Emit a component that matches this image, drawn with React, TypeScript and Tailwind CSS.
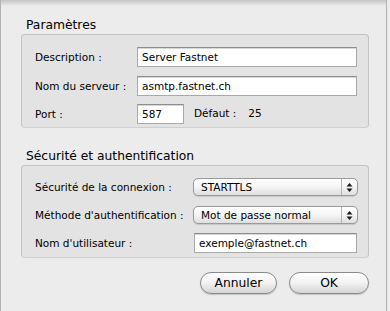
import React from 'react';

const FONT = "font-['DejaVu_Sans',sans-serif]";

function TextField({ value, width }: { value: string; width: string }) {
  return (
    <div
      className={`${width} h-[20px] border border-[#a9a9a9] border-t-[#8d8d8d] bg-white pl-[4px] text-[10.5px] leading-[18px] text-black shadow-[inset_0_1px_0_#d8d8d8]`}
    >
      {value}
    </div>
  );
}

function PopUp({ value }: { value: string }) {
  return (
    <div className="flex h-[18px] w-[165px] items-stretch rounded-[5px] border border-[#9a9a9a] bg-gradient-to-b from-white via-[#f5f5f5] to-[#dedede] shadow-[0_1px_1px_rgba(0,0,0,0.12)]">
      <span className="flex-1 pl-[7px] text-[10.5px] leading-[16px]">{value}</span>
      <span className="flex w-[16px] items-center justify-center border-l border-[#b3b3b3]">
        <svg width="7" height="11" viewBox="0 0 7 11">
          <path d="M3.5 1 L6.5 4.5 H0.5 Z" fill="#1a1a1a" />
          <path d="M3.5 10 L6.5 6.5 H0.5 Z" fill="#1a1a1a" />
        </svg>
      </span>
    </div>
  );
}

function Row({ label, labelWidth, children, className = '' }: { label: string; labelWidth: string; children: React.ReactNode; className?: string }) {
  return (
    <div className={`flex items-center ${className}`}>
      <span className={`${labelWidth} flex-none text-[10.5px] leading-[13px]`}>{label}</span>
      {children}
    </div>
  );
}

function PillButton({ label, width }: { label: string; width: string }) {
  return (
    <button
      type="button"
      className={`${width} h-[22px] rounded-full border border-[#8a8a8a] bg-gradient-to-b from-white via-[#f2f2f2] to-[#d4d4d4] text-[12.3px] leading-[20px] text-black shadow-[0_1px_1px_rgba(0,0,0,0.18)]`}
    >
      {label}
    </button>
  );
}

export default function App() {
  return (
    <div className={`flex h-[311px] w-[390px] bg-[#ececec] text-black ${FONT}`}>
      <div className="flex h-full w-[387px] flex-col border-x border-[#b2b2b2]">
        {/* title bar shadow */}
        <div className="h-[6px] bg-gradient-to-b from-[#c4c4c4] to-[#ececec]" />

        <div className="flex flex-col pl-[20px]">
          <h2 className="ml-[5px] mt-[12px] text-[12.3px] leading-[15px] font-normal">Paramètres</h2>
          <div className="mt-[1px] h-[94px] w-[348px] rounded-[4px] border border-[#c3c3c3] border-b-[#d0d0d0] bg-[#e3e3e3] pl-[13px] pt-[12px]">
            <Row label="Description :" labelWidth="w-[102px]">
              <TextField value="Server Fastnet" width="w-[220px]" />
            </Row>
            <Row label="Nom du serveur :" labelWidth="w-[102px]" className="mt-[9px]">
              <TextField value="asmtp.fastnet.ch" width="w-[220px]" />
            </Row>
            <Row label="Port :" labelWidth="w-[102px]" className="mt-[8px]">
              <TextField value="587" width="w-[47px]" />
              <span className="ml-[10px] text-[10.5px]">Défaut :</span>
              <span className="ml-[12px] text-[10.5px]">25</span>
            </Row>
          </div>

          <h2 className="ml-[5px] mt-[21px] text-[12.3px] leading-[15px] font-normal">Sécurité et authentification</h2>
          <div className="mt-[1px] h-[93px] w-[348px] rounded-[4px] border border-[#c3c3c3] border-b-[#d0d0d0] bg-[#e3e3e3] pl-[13px] pt-[12px]">
            <Row label="Sécurité de la connexion :" labelWidth="w-[158px]">
              <PopUp value="STARTTLS" />
            </Row>
            <Row label="Méthode d'authentification :" labelWidth="w-[158px]" className="mt-[10px]">
              <PopUp value="Mot de passe normal" />
            </Row>
            <Row label="Nom d'utilisateur :" labelWidth="w-[158px]" className="mt-[9px]">
              <div className="ml-[1px]">
                <TextField value="exemple@fastnet.ch" width="w-[163px]" />
              </div>
            </Row>
          </div>

          <div className="mt-[14px] flex w-[348px] justify-end gap-[12px]">
            <PillButton label="Annuler" width="w-[77px]" />
            <PillButton label="OK" width="w-[80px]" />
          </div>
        </div>
      </div>
    </div>
  );
}
